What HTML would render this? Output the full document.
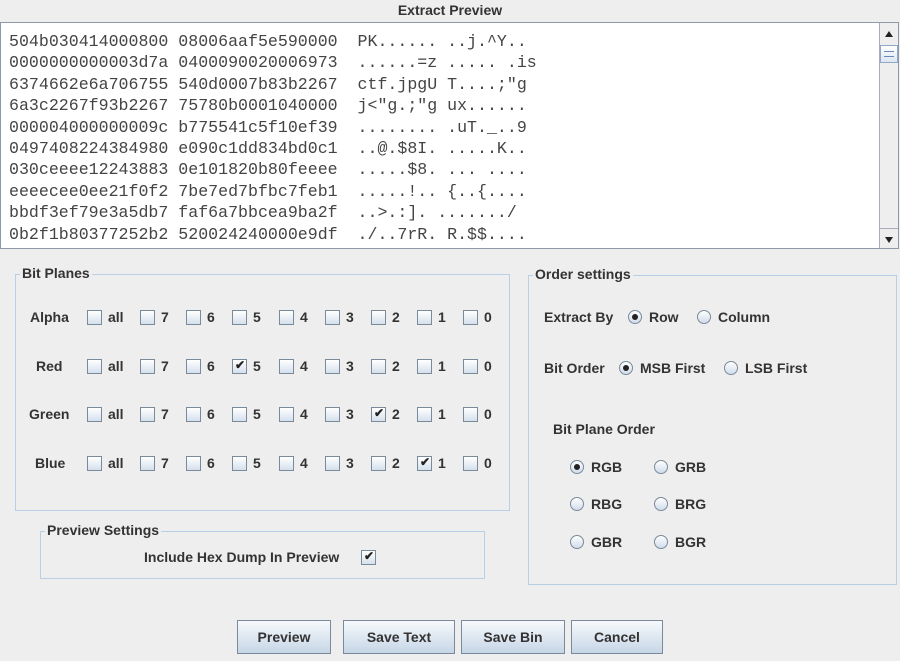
<!DOCTYPE html>
<html><head><meta charset="utf-8"><style>
*{margin:0;padding:0;box-sizing:border-box}
body{width:900px;height:661px;background:#eeeeee;position:relative;overflow:hidden;font-family:"Liberation Sans",sans-serif;font-size:14px;color:#333;font-weight:bold}
.a{position:absolute;white-space:nowrap}
.title{left:0;width:900px;top:2px;text-align:center;color:#333;font-size:14px}
.ta{left:0;top:22px;width:899px;height:227px;background:#fff;border:1px solid #8e9aa8;overflow:hidden}
.mono{position:absolute;left:8px;top:8px;font-family:"Liberation Mono",monospace;font-weight:normal;font-size:16.6px;line-height:21.4px;color:#444;white-space:pre}
.sb{position:absolute;right:0;top:0;width:19px;height:225px;background:#eee;border-left:1px solid #aab}
.fs{position:absolute;border:1px solid #b8cfe5}
.lg{position:absolute;background:#eeeeee;padding:0 2px;top:-10px;left:4px;font-size:14px}
.cb{position:absolute;width:15px;height:15px;border:1px solid #7a8a99;background:linear-gradient(#fff,#d5e0ec)}
.cb.c::after{content:"\2714";position:absolute;left:2px;top:-2px;font-size:12px;color:#222}
.rd{position:absolute;width:14px;height:14px;border-radius:50%;border:1px solid #7a8a99;background:linear-gradient(#fff,#d0dceb)}
.rd.c::after{content:"";position:absolute;left:3px;top:3px;width:6px;height:6px;border-radius:50%;background:#222}
.btn{position:absolute;top:620px;height:34px;border:1px solid #7a8a9a;background:linear-gradient(#f6f9fc,#c6d6e6);text-align:center;line-height:32px;font-size:14px}
</style></head><body>
<div class="a title">Extract Preview</div>
<div class="a ta"><div class="mono">504b030414000800 08006aaf5e590000  PK...... ..j.^Y..
0000000000003d7a 0400090020006973  ......=z ..... .is
6374662e6a706755 540d0007b83b2267  ctf.jpgU T....;"g
6a3c2267f93b2267 75780b0001040000  j&lt;"g.;"g ux......
000004000000009c b775541c5f10ef39  ........ .uT._..9
0497408224384980 e090c1dd834bd0c1  ..@.$8I. .....K..
030ceeee12243883 0e101820b80feeee  .....$8. ... ....
eeeecee0ee21f0f2 7be7ed7bfbc7feb1  .....!.. {..{....
bbdf3ef79e3a5db7 faf6a7bbcea9ba2f  ..>.:]. ......./
0b2f1b80377252b2 520024240000e9df  ./..7rR. R.$$....
057248614f7455f0 0400081415010e00  .....</div>
<div class="sb"><div style="position:absolute;left:5px;top:8px;border:4px solid transparent;border-bottom:6px solid #222;border-top:0"></div>
<div style="position:absolute;left:0;top:22px;width:18px;height:18px;border:1px solid #8fa8c8;background:linear-gradient(#fff,#dbe6f3)"><div style="margin:5px 3px;height:6px;border-top:1px solid #6a8ab5;border-bottom:1px solid #6a8ab5"></div></div>
<div style="position:absolute;left:0;top:205px;width:18px;border-top:1px solid #aab"></div>
<div style="position:absolute;left:5px;top:214px;border:4px solid transparent;border-top:6px solid #222;border-bottom:0"></div></div></div>

<div class="fs" style="left:15px;top:274px;width:495px;height:237px"><div class="lg">Bit Planes</div></div>
<div class="a" style="left:30px;top:309px">Alpha</div>
<div class="a" style="left:36px;top:358px">Red</div>
<div class="a" style="left:29px;top:406px">Green</div>
<div class="a" style="left:35px;top:455px">Blue</div>

<div class="cb" style="left:87px;top:310px"></div><div class="a" style="left:108px;top:309px">all</div>
<div class="cb" style="left:140px;top:310px"></div><div class="a" style="left:161px;top:309px">7</div>
<div class="cb" style="left:186px;top:310px"></div><div class="a" style="left:207px;top:309px">6</div>
<div class="cb" style="left:232px;top:310px"></div><div class="a" style="left:253px;top:309px">5</div>
<div class="cb" style="left:279px;top:310px"></div><div class="a" style="left:300px;top:309px">4</div>
<div class="cb" style="left:325px;top:310px"></div><div class="a" style="left:346px;top:309px">3</div>
<div class="cb" style="left:371px;top:310px"></div><div class="a" style="left:392px;top:309px">2</div>
<div class="cb" style="left:417px;top:310px"></div><div class="a" style="left:438px;top:309px">1</div>
<div class="cb" style="left:463px;top:310px"></div><div class="a" style="left:484px;top:309px">0</div>

<div class="cb" style="left:87px;top:359px"></div><div class="a" style="left:108px;top:358px">all</div>
<div class="cb" style="left:140px;top:359px"></div><div class="a" style="left:161px;top:358px">7</div>
<div class="cb" style="left:186px;top:359px"></div><div class="a" style="left:207px;top:358px">6</div>
<div class="cb c" style="left:232px;top:359px"></div><div class="a" style="left:253px;top:358px">5</div>
<div class="cb" style="left:279px;top:359px"></div><div class="a" style="left:300px;top:358px">4</div>
<div class="cb" style="left:325px;top:359px"></div><div class="a" style="left:346px;top:358px">3</div>
<div class="cb" style="left:371px;top:359px"></div><div class="a" style="left:392px;top:358px">2</div>
<div class="cb" style="left:417px;top:359px"></div><div class="a" style="left:438px;top:358px">1</div>
<div class="cb" style="left:463px;top:359px"></div><div class="a" style="left:484px;top:358px">0</div>

<div class="cb" style="left:87px;top:407px"></div><div class="a" style="left:108px;top:406px">all</div>
<div class="cb" style="left:140px;top:407px"></div><div class="a" style="left:161px;top:406px">7</div>
<div class="cb" style="left:186px;top:407px"></div><div class="a" style="left:207px;top:406px">6</div>
<div class="cb" style="left:232px;top:407px"></div><div class="a" style="left:253px;top:406px">5</div>
<div class="cb" style="left:279px;top:407px"></div><div class="a" style="left:300px;top:406px">4</div>
<div class="cb" style="left:325px;top:407px"></div><div class="a" style="left:346px;top:406px">3</div>
<div class="cb c" style="left:371px;top:407px"></div><div class="a" style="left:392px;top:406px">2</div>
<div class="cb" style="left:417px;top:407px"></div><div class="a" style="left:438px;top:406px">1</div>
<div class="cb" style="left:463px;top:407px"></div><div class="a" style="left:484px;top:406px">0</div>

<div class="cb" style="left:87px;top:456px"></div><div class="a" style="left:108px;top:455px">all</div>
<div class="cb" style="left:140px;top:456px"></div><div class="a" style="left:161px;top:455px">7</div>
<div class="cb" style="left:186px;top:456px"></div><div class="a" style="left:207px;top:455px">6</div>
<div class="cb" style="left:232px;top:456px"></div><div class="a" style="left:253px;top:455px">5</div>
<div class="cb" style="left:279px;top:456px"></div><div class="a" style="left:300px;top:455px">4</div>
<div class="cb" style="left:325px;top:456px"></div><div class="a" style="left:346px;top:455px">3</div>
<div class="cb" style="left:371px;top:456px"></div><div class="a" style="left:392px;top:455px">2</div>
<div class="cb c" style="left:417px;top:456px"></div><div class="a" style="left:438px;top:455px">1</div>
<div class="cb" style="left:463px;top:456px"></div><div class="a" style="left:484px;top:455px">0</div>

<div class="fs" style="left:40px;top:531px;width:445px;height:48px"><div class="lg" style="left:4px">Preview Settings</div></div>
<div class="a" style="left:144px;top:549px">Include Hex Dump In Preview</div>
<div class="cb c" style="left:361px;top:550px"></div>

<div class="fs" style="left:528px;top:275px;width:369px;height:310px"><div class="lg">Order settings</div></div>
<div class="a" style="left:544px;top:309px">Extract By</div>
<div class="rd c" style="left:628px;top:310px"></div><div class="a" style="left:649px;top:309px">Row</div>
<div class="rd" style="left:697px;top:310px"></div><div class="a" style="left:718px;top:309px">Column</div>
<div class="a" style="left:544px;top:360px">Bit Order</div>
<div class="rd c" style="left:619px;top:361px"></div><div class="a" style="left:640px;top:360px">MSB First</div>
<div class="rd" style="left:724px;top:361px"></div><div class="a" style="left:745px;top:360px">LSB First</div>
<div class="a" style="left:553px;top:421px">Bit Plane Order</div>
<div class="rd c" style="left:570px;top:460px"></div><div class="a" style="left:591px;top:459px">RGB</div>
<div class="rd" style="left:654px;top:460px"></div><div class="a" style="left:675px;top:459px">GRB</div>
<div class="rd" style="left:570px;top:497px"></div><div class="a" style="left:591px;top:496px">RBG</div>
<div class="rd" style="left:654px;top:497px"></div><div class="a" style="left:675px;top:496px">BRG</div>
<div class="rd" style="left:570px;top:535px"></div><div class="a" style="left:591px;top:534px">GBR</div>
<div class="rd" style="left:654px;top:535px"></div><div class="a" style="left:675px;top:534px">BGR</div>

<div class="btn" style="left:237px;width:94px">Preview</div>
<div class="btn" style="left:343px;width:112px">Save Text</div>
<div class="btn" style="left:461px;width:104px">Save Bin</div>
<div class="btn" style="left:571px;width:92px">Cancel</div>
</body></html>
